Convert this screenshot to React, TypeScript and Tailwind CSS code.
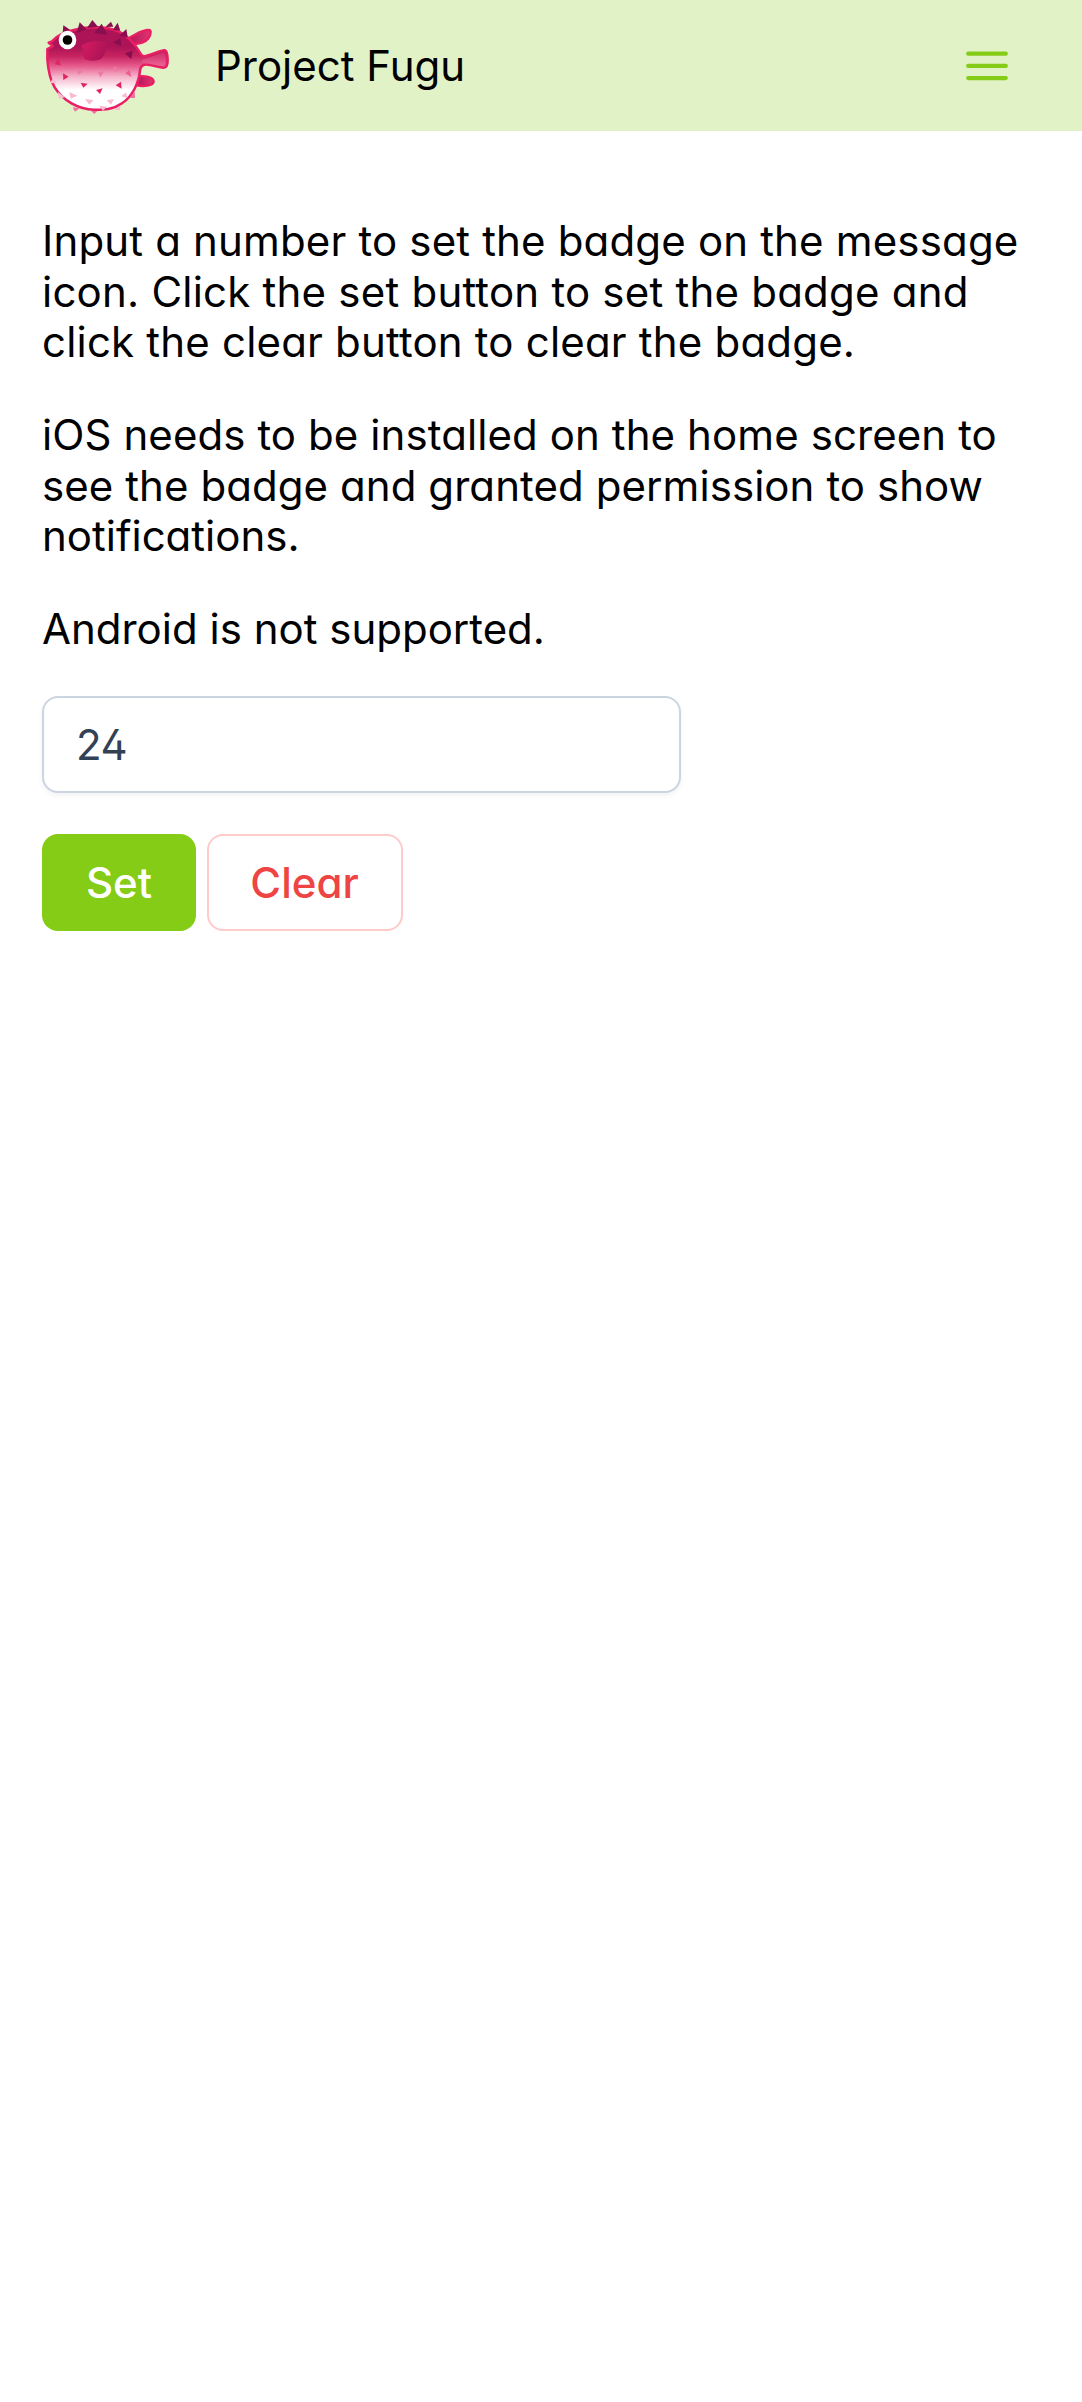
import React, { useState } from 'react';

const DARK_SPIKES = [
  'M100 46 L120 59 L98 68Z',
  'M149 37 L170 58 L140 69Z',
  'M187 30 L204 50 L171 54Z',
  'M243 35 L250 50 L226 51Z',
  'M263 38 L271 62 L248 60Z',
  'M215 41 L232 74 L193 69Z',
  'M289 57 L293 82 L268 77Z',
  'M271 84 L274 109 L249 97Z',
  'M308 122 L304 147 L284 130Z',
];
const PINK_SPIKES = [
  'M84 145 L93 166 L74 163Z',
  'M99 190 L116 200 L100 210Z',
  'M152 218 L173 221 L160 233Z',
  'M198 240 L218 235 L210 252Z',
  'M273 215 L275 236 L257 226Z',
];
const PALE_SPIKES = [
  'M141 175 L159 184 L145 194Z',
  'M203 187 L222 184 L212 202Z',
  'M258 167 L261 187 L244 179Z',
];
const MID_SPIKES = ['M299 179 L304 201 L286 190Z'];
const LIGHT_SPIKES = [
  'M118 246 L142 257 L122 266Z',
  'M165 267 L190 270 L178 284Z',
  'M230 271 L252 267 L243 284Z',
  'M288 247 L292 264 L274 259Z',
  'M69 204 L79 220 L60 219Z',
  'M83 245 L105 262 L87 266Z',
  'M273 285 L269 301 L253 299Z',
  'M207 287 L231 290 L219 302Z',
];
const EDGE_SPIKES = [
  'M128 292 L149 295 L135 305Z',
  'M183 303 L202 303 L193 312Z',
  'M314 244 L315 264 L300 264Z',
];

function FuguLogo() {
  return (
    <svg viewBox="36 24 396 300" className="h-[100px] w-[132px] shrink-0" aria-label="Fugu">
      <defs>
        <linearGradient id="body" x1="0" y1="0" x2="0" y2="1">
          <stop offset="0" stopColor="#ad1457" />
          <stop offset="0.24" stopColor="#ad1457" />
          <stop offset="0.35" stopColor="#c6235f" />
          <stop offset="0.47" stopColor="#e65a8c" />
          <stop offset="0.6" stopColor="#f5b3ca" />
          <stop offset="0.76" stopColor="#ffffff" />
          <stop offset="1" stopColor="#ffffff" />
        </linearGradient>
        <linearGradient id="fin" x1="0" y1="0" x2="1" y2="0">
          <stop offset="0" stopColor="#b5165b" />
          <stop offset="1" stopColor="#e0356f" />
        </linearGradient>
        <linearGradient id="tail" x1="0" y1="0" x2="0" y2="1">
          <stop offset="0" stopColor="#cf2a67" />
          <stop offset="1" stopColor="#ec6595" />
        </linearGradient>
        <linearGradient id="sideFin" x1="0" y1="0" x2="1" y2="0.4">
          <stop offset="0" stopColor="#d81b60" />
          <stop offset="1" stopColor="#ad1457" />
        </linearGradient>
      </defs>
      <g stroke="#e91e63" strokeWidth="7" strokeLinejoin="round">
        <path d="M294 85 C313 76 323 67 340 63 C352 58 362 58 362 66 C362 82 350 94 337 98 L313 103Z" fill="url(#fin)" />
        <path d="M326 199 C341 197 371 200 371 215 C370 228 338 230 322 226Z" fill="url(#fin)" />
      </g>
      <path
        d="M66 94 C80 78 105 65 140 58 C176 49 230 48 267 65 C298 79 320 110 335 136 C344 143 350 137 360 134 C375 129 390 123 402 121 C411 120 413 138 413 151 C413 164 409 173 401 173 C386 172 372 166 355 164 C342 161 332 167 330 181 C327 216 309 258 276 280 C248 300 217 299 192 299 C146 299 98 271 74 232 C58 205 54 175 52 148 L52 117 L69 108 L56 98Z"
        fill="url(#body)"
        stroke="#e91e63"
        strokeWidth="7.500"
        strokeLinejoin="round"
      />
      <path d="M336 149 C357 145 379 133 402 125 C409 138 409 158 401 169 C378 166 361 160 338 159Z" fill="url(#tail)" />
      <path d="M154 109 C166 94 205 91 228 97 C230 116 224 139 212 147 C201 154 177 154 164 147 C158 138 164 130 162 121Z" fill="url(#sideFin)" />
      <g fill="#880e4f">{DARK_SPIKES.map((d) => <path key={d} d={d} />)}</g>
      <g fill="#e0265f">{PINK_SPIKES.map((d) => <path key={d} d={d} />)}</g>
      <g fill="#ec7ba3">{PALE_SPIKES.map((d) => <path key={d} d={d} />)}</g>
      <g fill="#ec5d90">{MID_SPIKES.map((d) => <path key={d} d={d} />)}</g>
      <g fill="#f8bbd0">{LIGHT_SPIKES.map((d) => <path key={d} d={d} />)}</g>
      <g fill="#f070a0">{EDGE_SPIKES.map((d) => <path key={d} d={d} />)}</g>
      <ellipse cx="112.500" cy="90" rx="26.500" ry="27.500" fill="#fff" />
      <circle cx="112.500" cy="90" r="14.500" fill="#000" />
    </svg>
  );
}

function MenuIcon() {
  return (
    <svg viewBox="0 0 42 42" className="h-[42px] w-[42px]" stroke="#84cc16" strokeWidth="4.200" strokeLinecap="round">
      <path d="M2.200 8.700H39.800M2.200 20.900H39.800M2.200 33.100H39.800" />
    </svg>
  );
}

export default function App() {
  const [value, setValue] = useState('24');
  return (
    <div className="min-h-[2402px] bg-white font-['Inter',sans-serif] text-[42px] leading-[51px] text-black [font-feature-settings:'cv02','cv03','cv04','cv11']">
      <header className="flex h-[131px] items-center bg-[#e1f2c7] pr-[74px] pl-[42px]">
        <div className="flex pt-1.25">
          <FuguLogo />
        </div>
        <span className="ml-[41px]">Project Fugu</span>
        <button className="ml-auto" aria-label="Menu">
          <MenuIcon />
        </button>
      </header>
      <main className="px-[42px] pt-[85px]">
        <div className="flex flex-col gap-[42.4px] leading-[50.6px]">
          <p>
            <span className="tracking-[0.165px]">Input a number to set the badge on the message</span>{' '}
            <span className="tracking-[0.22px]">icon. Click the set button to set the badge and</span>{' '}
            <span className="tracking-[0.19px]">click the clear button to clear the badge.</span>
          </p>
          <p>
            <span className="tracking-[0.09px]">iOS needs to be installed on the home screen to</span>{' '}
            <span className="tracking-[0.07px]">see the badge and granted permission to show</span>{' '}
            <span>notifications.</span>
          </p>
          <p>Android is not supported.</p>
        </div>
        <input
          value={value}
          onChange={(e) => setValue(e.target.value)}
          className="mt-[41px] block h-[97px] w-[639px] rounded-[16px] border-2 border-[#cbd5e1] bg-white px-[32px] leading-[51px] tracking-[-0.5px] text-[#334155] shadow-[0_3px_5px_rgba(18,18,23,0.05)] outline-none"
        />
        <div className="mt-[41px] flex gap-[10.5px]">
          <button className="h-[97px] w-[154px] rounded-[16px] bg-[#84cc16] font-medium text-white">Set</button>
          <button
            onClick={() => setValue('')}
            className="h-[97px] w-[196px] rounded-[16px] border-2 border-[#fecaca] font-medium text-[#ef4444]"
          >
            Clear
          </button>
        </div>
      </main>
    </div>
  );
}
